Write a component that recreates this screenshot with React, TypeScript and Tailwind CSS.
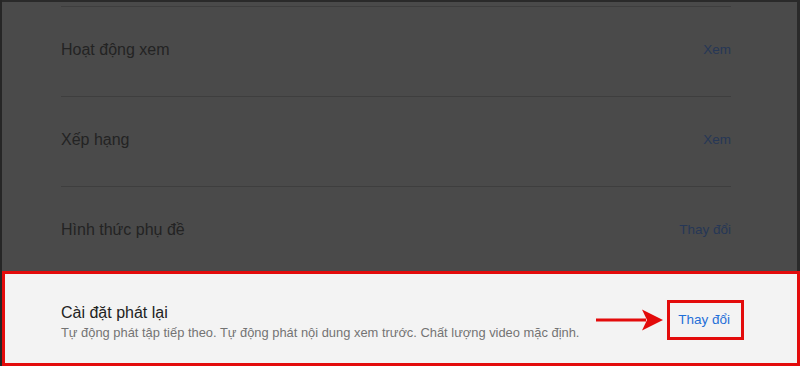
import React from "react";

const font = { fontFamily: '"Liberation Sans", Arial, sans-serif' };

function DimRow({ label, action }: { label: string; action: string }) {
  return (
    <div className="flex h-[90px] shrink-0 items-center justify-between border-t border-[#3e3e3e] pb-[3px]">
      <span className="whitespace-nowrap text-[16px] leading-5 text-[#232323]">{label}</span>
      <span className="whitespace-nowrap text-[13.5px] leading-5 text-[#263756]">{action}</span>
    </div>
  );
}

export default function App() {
  return (
    <div
      className="flex h-[366px] w-[800px] flex-col overflow-hidden border-l-2 border-[#262626] bg-[#4a4a4a]"
      style={font}
    >
      <div className="flex h-[271px] shrink-0 flex-col overflow-hidden border-r-[3px] border-t-2 border-[#2a2a2a] pl-[59px] pr-[66px] pt-[4px]">
        <DimRow label="Hoạt động xem" action="Xem" />
        <DimRow label="Xếp hạng" action="Xem" />
        <DimRow label="Hình thức phụ đề" action="Thay đổi" />
      </div>
      <div className="flex flex-1 items-center justify-between border-[3px] border-[#e30b0b] bg-[#f3f3f3] pl-[56px] pr-[53px]">
        <div className="flex flex-col pt-[8px]">
          <span className="whitespace-nowrap text-[16px] leading-5 text-[#222]">Cài đặt phát lại</span>
          <span className="whitespace-nowrap text-[12.9px] leading-5 text-[#737373]">
            Tự động phát tập tiếp theo. Tự động phát nội dung xem trước. Chất lượng video mặc định.
          </span>
        </div>
        <div className="flex shrink-0 items-center gap-[4px] pt-[2px]">
          <svg width="67" height="22" viewBox="0 0 67 22" className="block">
            <rect x="0" y="9.5" width="50" height="3" fill="#e30b0b" />
            <path d="M67 11 L46 0.5 L51 11 L46 21.5 Z" fill="#e30b0b" />
          </svg>
          <span className="whitespace-nowrap border-[3px] border-[#e30b0b] py-[8px] pl-[8px] pr-[11px] text-[13.5px] leading-[18px] text-[#1f6fd8]">
            Thay đổi
          </span>
        </div>
      </div>
    </div>
  );
}
